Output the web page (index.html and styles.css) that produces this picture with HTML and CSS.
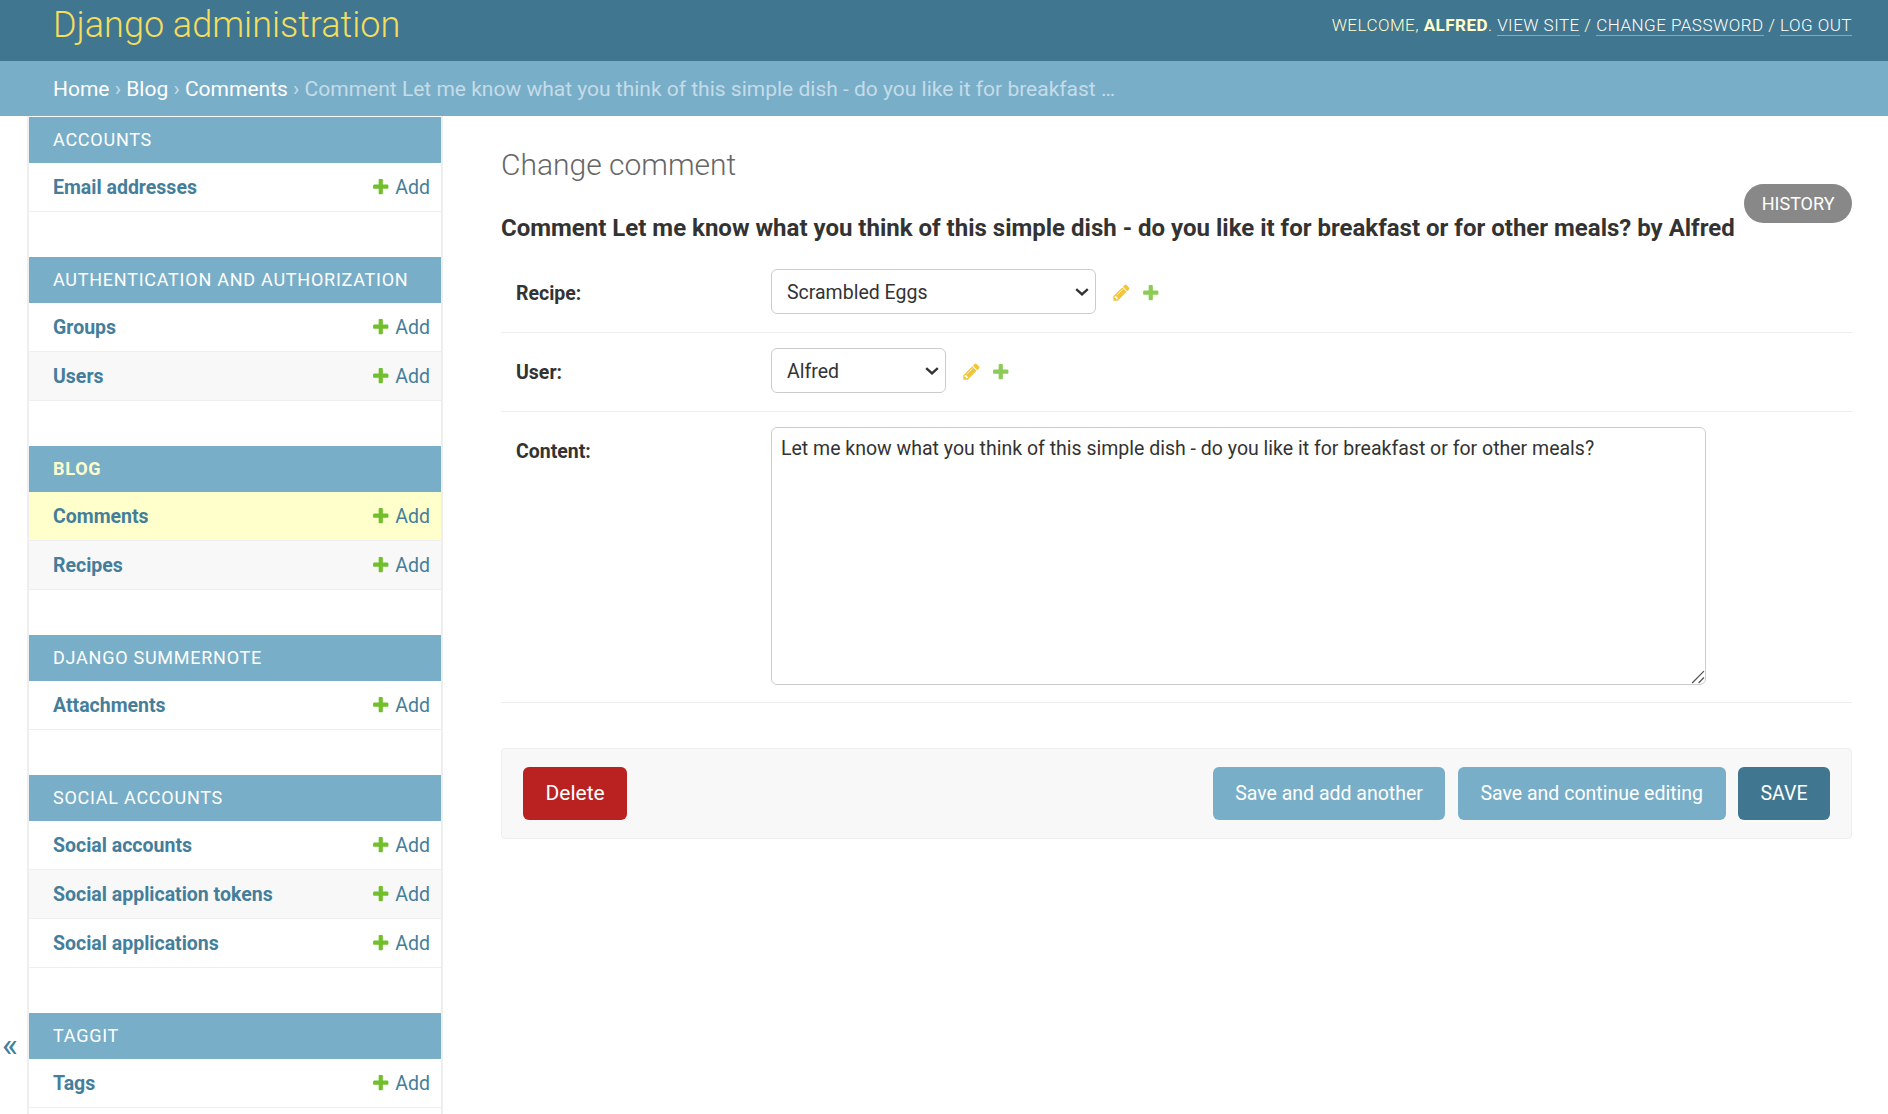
FILE: index.html
```html
<!DOCTYPE html>
<html lang="en">
<head>
  <meta charset="UTF-8">
  <title>Change comment | Django site admin</title>
  <link rel="stylesheet" href="styles.css">
</head>
<body>
  <svg class="defs" width="0" height="0">
    <symbol id="plus" viewBox="0 0 1792 1792">
      <path d="M1600 796v192q0 40-28 68t-68 28h-416v416q0 40-28 68t-68 28h-192q-40 0-68-28t-28-68v-416h-416q-40 0-68-28t-28-68v-192q0-40 28-68t68-28h416v-416q0-40 28-68t68-28h192q40 0 68 28t28 68v416h416q40 0 68 28t28 68z"/>
    </symbol>
    <symbol id="pencil" viewBox="0 0 1792 1792">
      <path d="M491 1536l91-91-235-235-91 91v107h128v128h107zm523-928q0-22-22-22-10 0-17 7l-542 542q-7 7-7 17 0 22 22 22 10 0 17-7l542-542q7-7 7-17zm-54-192l416 416-832 832h-416v-416zm683 96q0 53-37 90l-166 166-416-416 166-165q36-38 90-38 53 0 91 38l235 234q37 39 37 91z"/>
    </symbol>
  </svg>

  <header class="site-header">
    <a class="site-name" href="#">Django administration</a>
    <div class="user-tools">
      Welcome, <strong>Alfred</strong>.
      <a href="#">View site</a> /
      <a href="#">Change password</a> /
      <a href="#">Log out</a>
    </div>
  </header>

  <nav class="breadcrumbs">
    <a href="#">Home</a> › <a href="#">Blog</a> › <a href="#">Comments</a> › Comment Let me know what you think of this simple dish - do you like it for breakfast …
  </nav>

  <div class="page">
    <button class="sidebar-toggle" type="button">«</button>

    <aside class="sidebar">
      <section class="module">
        <h3 class="caption">Accounts</h3>
        <div class="row"><a class="row-name" href="#">Email addresses</a><a class="add" href="#"><svg class="icon-plus"><use href="#plus"/></svg>Add</a></div>
      </section>
      <section class="module">
        <h3 class="caption">Authentication and Authorization</h3>
        <div class="row"><a class="row-name" href="#">Groups</a><a class="add" href="#"><svg class="icon-plus"><use href="#plus"/></svg>Add</a></div>
        <div class="row row-alt"><a class="row-name" href="#">Users</a><a class="add" href="#"><svg class="icon-plus"><use href="#plus"/></svg>Add</a></div>
      </section>
      <section class="module">
        <h3 class="caption caption-current">Blog</h3>
        <div class="row row-current"><a class="row-name" href="#">Comments</a><a class="add" href="#"><svg class="icon-plus"><use href="#plus"/></svg>Add</a></div>
        <div class="row row-alt"><a class="row-name" href="#">Recipes</a><a class="add" href="#"><svg class="icon-plus"><use href="#plus"/></svg>Add</a></div>
      </section>
      <section class="module">
        <h3 class="caption">Django Summernote</h3>
        <div class="row"><a class="row-name" href="#">Attachments</a><a class="add" href="#"><svg class="icon-plus"><use href="#plus"/></svg>Add</a></div>
      </section>
      <section class="module">
        <h3 class="caption">Social Accounts</h3>
        <div class="row"><a class="row-name" href="#">Social accounts</a><a class="add" href="#"><svg class="icon-plus"><use href="#plus"/></svg>Add</a></div>
        <div class="row row-alt"><a class="row-name" href="#">Social application tokens</a><a class="add" href="#"><svg class="icon-plus"><use href="#plus"/></svg>Add</a></div>
        <div class="row"><a class="row-name" href="#">Social applications</a><a class="add" href="#"><svg class="icon-plus"><use href="#plus"/></svg>Add</a></div>
      </section>
      <section class="module">
        <h3 class="caption">Taggit</h3>
        <div class="row"><a class="row-name" href="#">Tags</a><a class="add" href="#"><svg class="icon-plus"><use href="#plus"/></svg>Add</a></div>
      </section>
    </aside>

    <main class="content">
      <div class="title-bar">
        <h1 class="page-title">Change comment</h1>
      </div>
      <a class="history" href="#">History</a>
      <h2 class="object-title">Comment Let me know what you think of this simple dish - do you like it for breakfast or for other meals? by Alfred</h2>

      <form class="change-form">
        <div class="form-row">
          <label class="form-label" for="recipe">Recipe:</label>
          <select class="field select-recipe" id="recipe"><option>Scrambled Eggs</option></select>
          <a class="related" href="#"><svg class="icon-pencil"><use href="#pencil"/></svg></a>
          <a class="related related-add" href="#"><svg class="icon-related-plus"><use href="#plus"/></svg></a>
        </div>
        <div class="form-row">
          <label class="form-label" for="user">User:</label>
          <select class="field select-user" id="user"><option>Alfred</option></select>
          <a class="related" href="#"><svg class="icon-pencil"><use href="#pencil"/></svg></a>
          <a class="related related-add" href="#"><svg class="icon-related-plus"><use href="#plus"/></svg></a>
        </div>
        <div class="form-row form-row-top">
          <label class="form-label" for="content">Content:</label>
          <textarea class="field content-area" id="content">Let me know what you think of this simple dish - do you like it for breakfast or for other meals?</textarea>
        </div>

        <div class="submit-row">
          <a class="btn btn-delete" href="#">Delete</a>
          <div class="submit-actions">
            <a class="btn" href="#">Save and add another</a>
            <a class="btn" href="#">Save and continue editing</a>
            <a class="btn btn-save" href="#">SAVE</a>
          </div>
        </div>
      </form>
    </main>
  </div>
</body>
</html>
```

FILE: styles.css
```css
* {
  box-sizing: border-box;
}
html, body {
  height: 100%;
}
body {
  margin: 0;
  display: flex;
  flex-direction: column;
  overflow: hidden;
  font-family: Roboto, "Liberation Sans", sans-serif;
  font-size: 19.5px;
  color: #333;
  background: #fff;
}
a {
  text-decoration: none;
}
.defs {
  position: absolute;
}

/* header */
.site-header {
  flex: none;
  height: 61px;
  display: flex;
  justify-content: space-between;
  align-items: center;
  padding: 0 36px 12px 53px;
  background: #417690;
}
.site-name {
  font-size: 36px;
  font-weight: 300;
  color: #f5dd5d;
}
.user-tools {
  font-size: 17px;
  font-weight: 300;
  text-transform: uppercase;
  letter-spacing: 0.48px;
  color: #ffc;
}
.user-tools strong {
  font-weight: 700;
}
.user-tools a {
  color: #fff;
  border-bottom: 1px solid #79aec8;
}

.breadcrumbs {
  flex: none;
  height: 55px;
  padding: 1px 53px 0;
  font-size: 21px;
  line-height: 54px;
  background: #79aec8;
  color: #c4dce8;
}
.breadcrumbs a {
  color: #fff;
}

/* page */
.page {
  flex: 1;
  min-height: 0;
  display: flex;
}
.sidebar-toggle {
  flex: none;
  width: 29px;
  padding: 0 0 50px 2px;
  display: flex;
  justify-content: flex-start;
  align-items: flex-end;
  border: 0;
  border-right: 2px solid #eee;
  background: #fff;
  color: #447e9b;
  font-family: inherit;
  font-size: 34px;
}
.sidebar {
  flex: none;
  width: 414px;
  padding-top: 1px;
  border-right: 2px solid #eee;
}
.module {
  margin-bottom: 45px;
}
.caption {
  margin: 0;
  height: 46px;
  padding-left: 24px;
  font-size: 18px;
  font-weight: 400;
  line-height: 46px;
  letter-spacing: 0.75px;
  text-transform: uppercase;
  background: #79aec8;
  color: #fff;
}
.caption-current {
  color: #ffc;
  font-weight: 700;
}
.row {
  height: 49px;
  padding: 0 11px 0 24px;
  display: flex;
  justify-content: space-between;
  align-items: center;
  border-bottom: 1px solid #eee;
}
.row-alt {
  background: #f8f8f8;
}
.row-current {
  background: #ffc;
}
.row-name {
  font-weight: 700;
  color: #447e9b;
}
.add {
  display: flex;
  align-items: center;
  gap: 5px;
  color: #447e9b;
}
.icon-plus {
  width: 19.5px;
  height: 19.5px;
  fill: #70bf2b;
}

/* content */
.content {
  flex: 1;
  min-width: 0;
  padding: 0 36px 0 58px;
}
.page-title {
  margin: 31px 0 0;
  font-size: 30px;
  font-weight: 300;
  color: #666;
}
.history {
  float: right;
  margin-top: 2px;
  height: 39px;
  padding: 0 17.5px;
  line-height: 39px;
  border-radius: 20px;
  font-size: 18px;
  text-transform: uppercase;
  background: #888;
  color: #fff;
}
.object-title {
  margin: 32px 0 0;
  font-size: 24px;
  font-weight: 700;
}
.change-form {
  clear: both;
  margin-top: 12px;
}
.form-row {
  display: flex;
  align-items: center;
  padding: 15px 15px 18px;
  border-bottom: 1px solid #eee;
}
.form-row-top {
  align-items: flex-start;
  padding-bottom: 17px;
}
.form-label {
  flex: none;
  width: 255px;
  padding-top: 3px;
  font-weight: 700;
}
.form-row-top .form-label {
  padding-top: 13px;
}
.field {
  font-family: inherit;
  font-size: 19.5px;
  color: #333;
  border: 1px solid #ccc;
  border-radius: 6px;
  background: #fff;
}
.select-recipe,
.select-user {
  height: 45px;
  padding: 2px 10px 0 15px;
  appearance: none;
  background-image: url("data:image/svg+xml,%3Csvg xmlns='http://www.w3.org/2000/svg' viewBox='0 0 14 8'%3E%3Cpath d='M1.2 1.2 7 6.4l5.8-5.2' fill='none' stroke='%23333' stroke-width='2.4'/%3E%3C/svg%3E");
  background-repeat: no-repeat;
  background-position: right 6px center;
  background-size: 14px 8px;
}
.select-recipe {
  width: 325px;
}
.select-user {
  width: 175px;
}
.content-area {
  width: 935px;
  height: 258px;
  padding: 9px 9px;
}
.content-area::-webkit-resizer {
  background: url("data:image/svg+xml,%3Csvg xmlns='http://www.w3.org/2000/svg' viewBox='0 0 14 14'%3E%3Cpath d='M2 13 13 2M8 13l5-5' fill='none' stroke='%23555' stroke-width='1.2'/%3E%3C/svg%3E") no-repeat center;
}
.related {
  display: flex;
  margin-left: 16px;
  padding-top: 2px;
}
.related-add {
  margin-left: 10px;
}
.icon-pencil {
  width: 19px;
  height: 19px;
  fill: #efb80b;
  opacity: 0.8;
}
.icon-related-plus {
  width: 19.5px;
  height: 19.5px;
  fill: #70bf2b;
  opacity: 0.8;
}

/* buttons */
.submit-row {
  margin-top: 45px;
  padding: 18px 21px;
  display: flex;
  justify-content: space-between;
  background: #f8f8f8;
  border: 1px solid #eee;
  border-radius: 4px;
}
.submit-actions {
  display: flex;
  gap: 12.5px;
}
.btn {
  height: 53px;
  padding: 0 22.5px;
  line-height: 53px;
  font-size: 19.5px;
  border-radius: 6px;
  background: #79aec8;
  color: #fff;
}
.btn-delete {
  font-size: 21px;
  background: #ba2121;
}
.btn-save {
  background: #417690;
}
```
